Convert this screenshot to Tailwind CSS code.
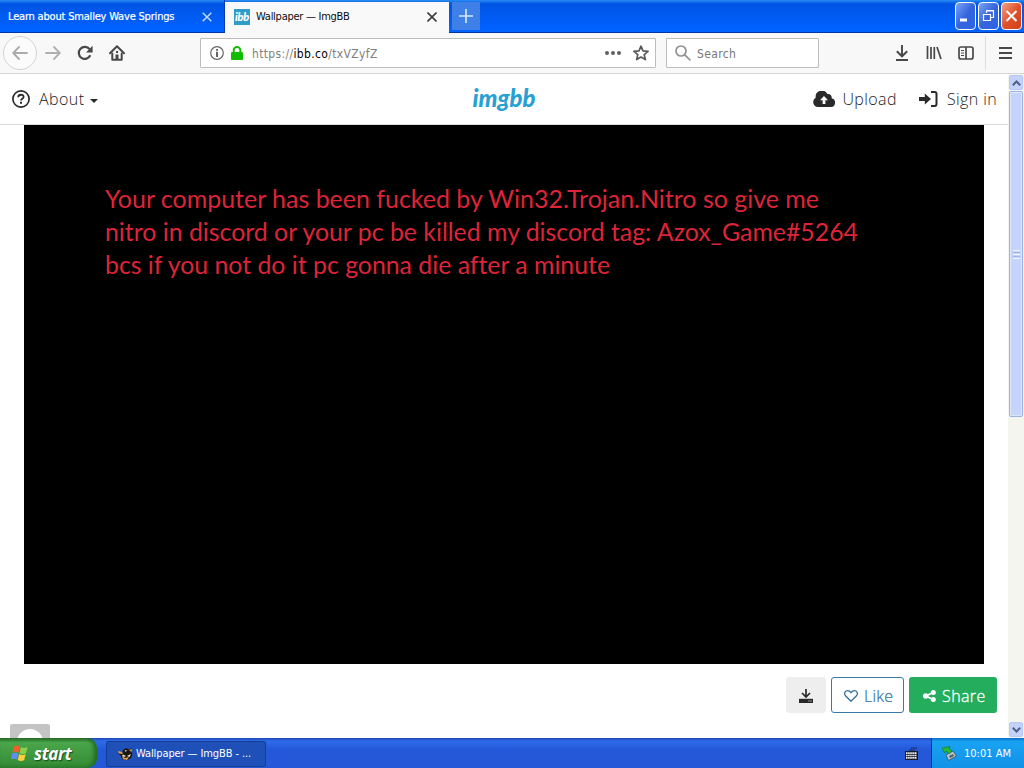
<!DOCTYPE html>
<html lang="en">
<head>
    <meta charset="UTF-8">
    <meta name="viewport" content="width=device-width, initial-scale=1.0">
    <script src="https://cdn.jsdelivr.net/npm/@tailwindcss/browser@4"></script>
    <title>Wallpaper — ImgBB</title>
</head>
<body class="w-[1024px] h-[768px] overflow-hidden bg-white flex flex-col font-['DejaVu_Sans_Condensed','DejaVu_Sans',sans-serif]">

<!-- Tab bar -->
<div class="h-[33px] shrink-0 flex items-start bg-linear-to-b from-[#2b8cf5] from-0% via-[#0054e3] via-12% to-[#0062ff] to-90% border-b border-[#0036a8] text-[11px]">
    <div class="w-[225px] h-8 flex items-center pl-2 pr-[12px] pt-[2px] text-white border-r border-[#0038b8]">
        <span class="grow pt-px whitespace-nowrap tracking-[-0.19px] [-webkit-text-stroke:0.2px_white]">Learn about Smalley Wave Springs</span>
        <svg class="w-[10px] h-[10px]" viewBox="0 0 10 10" stroke="#c4dcff" stroke-width="1.4"><path d="M0.7 0.7l8.6 8.6M9.3 0.7L0.7 9.3"/></svg>
    </div>
    <div class="w-[224px] h-[32px] mt-[2px] flex items-center pl-[9px] pr-[12px] pb-[2px] bg-[#f9f9fa] text-[#0c0c0d]">
        <span class="w-4 h-4 mr-[6px] bg-[#2f9dc8] text-white font-['Lato',sans-serif] font-black italic text-[11px] leading-[15px] text-center tracking-[-0.3px]">ibb</span>
        <span class="grow pt-px whitespace-nowrap tracking-[-0.26px]">Wallpaper — ImgBB</span>
        <svg class="w-[10px] h-[10px]" viewBox="0 0 10 10" stroke="#3c3c3e" stroke-width="1.6"><path d="M0.5 0.5l9 9M9.5 0.5l-9 9"/></svg>
    </div>
    <div class="w-[28px] h-[28px] mt-[2px] ml-[3px] bg-[#3f7fe8] flex items-center justify-center">
        <svg class="w-[14px] h-[14px]" viewBox="0 0 14 14" stroke="#d5e5ff" stroke-width="1.7"><path d="M7 0v14M0 7h14"/></svg>
    </div>
    <div class="ml-auto mr-[2px] mt-[2px] flex gap-[2px]">
        <div class="w-[21px] h-[28px] rounded-[4px] border border-white bg-linear-to-br from-[#7ba2f5] via-[#3565dc] to-[#2a62e8]">
            <svg class="w-[19px] h-[26px]" viewBox="0 0 19 26"><path fill="#fff" d="M4 15.500h7v3H4z"/></svg>
        </div>
        <div class="w-[21px] h-[28px] rounded-[4px] border border-white bg-linear-to-br from-[#7ba2f5] via-[#3565dc] to-[#2a62e8]">
            <svg class="w-[19px] h-[26px]" viewBox="0 0 19 26" fill="none" stroke="#fff" stroke-width="1.200"><path d="M7.500 10V8h7v6.500H12M7 7.500h8M4.500 11.500h7v6h-7zM4 11.500h8"/></svg>
        </div>
        <div class="w-[21px] h-[28px] rounded-[4px] border border-white bg-linear-to-br from-[#f0a184] via-[#e0512a] to-[#d0401a]">
            <svg class="w-[19px] h-[26px]" viewBox="0 0 19 26" stroke="#fff" stroke-width="2"><path d="M4.500 8l10 10M14.500 8l-10 10"/></svg>
        </div>
    </div>
</div>

<!-- Navigation toolbar -->
<div class="h-[41px] shrink-0 flex items-center bg-[#f8f8f8] border-b border-[#d6d6d6] text-[12px]">
    <div class="w-[34px] h-[34px] ml-[3px] rounded-full border border-[#d3d3d3] bg-[#fbfbfb] flex items-center justify-center">
        <svg class="w-4 h-4" viewBox="0 0 16 16" fill="none" stroke="#aaaaab" stroke-width="1.800" stroke-linecap="round" stroke-linejoin="round"><path d="M15 8H1.500M7 2L1.200 8L7 14"/></svg>
    </div>
    <svg class="w-4 h-4 ml-2" viewBox="0 0 16 16" fill="none" stroke="#b0b0b1" stroke-width="1.800" stroke-linecap="round" stroke-linejoin="round"><path d="M1 8h13.500M9 2l5.800 6L9 14"/></svg>
    <svg class="w-4 h-4 ml-4" viewBox="0 0 16 16" fill="none" stroke="#48484a" stroke-width="2.200"><path d="M13.300 10.300A6 6 0 1 1 12.600 4.200"/><path fill="#48484a" stroke="none" d="M15.600 0.800v6.700H9z"/></svg>
    <svg class="w-4 h-4 ml-4" viewBox="0 0 16 16" fill="none" stroke="#48484a" stroke-width="2" stroke-linejoin="round" stroke-linecap="round"><path d="M1 8.200L8 1.200l7 7"/><path d="M3.300 8.500v6.300h9.400V8.500"/><path fill="#48484a" stroke="none" d="M6.500 9.500h3V15h-3zM7 6h2v2H7z"/></svg>
    <div class="w-[456px] h-[30px] ml-[75px] flex items-center pl-[9px] pr-[6px] bg-white border border-[#bdbdbd] rounded-[1px]">
        <svg class="w-[14px] h-[14px]" viewBox="0 0 14 14"><circle cx="7" cy="7" r="6.300" fill="none" stroke="#666" stroke-width="1.200"/><path fill="#555" d="M6.100 3h1.800v1.700H6.100zM6.100 5.800h1.800V11H6.100z"/></svg>
        <svg class="w-3 h-[14px] ml-[7px]" viewBox="0 0 12 14"><path fill="#12bc00" d="M0 7.200Q0 6 1.200 6h9.600Q12 6 12 7.200V13q0 1-1 1H1q-1 0-1-1z"/><path fill="none" stroke="#12bc00" stroke-width="1.900" d="M2.700 7V4.300a3.300 3.300 0 0 1 6.600 0V7"/></svg>
        <span class="grow ml-[9px] pt-px whitespace-nowrap text-[#808080] tracking-[0.35px]">https://<span class="text-black">ibb.co</span>/txVZyfZ</span>
        <svg class="w-4 h-4" viewBox="0 0 16 16" fill="#606062"><circle cx="2" cy="8" r="2"/><circle cx="8" cy="8" r="2"/><circle cx="14" cy="8" r="2"/></svg>
        <svg class="w-4 h-4 ml-3" viewBox="0 0 16 16" fill="none" stroke="#58585a" stroke-width="1.700" stroke-linejoin="round"><path d="M8 1.200l2 4.700 5.100.4-3.900 3.300 1.200 5L8 12l-4.400 2.600 1.200-5L.9 6.300 6 5.900z"/></svg>
    </div>
    <div class="w-[153px] h-[30px] ml-[10px] flex items-center pl-2 bg-white border border-[#bdbdbd] rounded-[1px]">
        <svg class="w-4 h-4" viewBox="0 0 16 16" fill="none" stroke="#909091" stroke-width="1.700" stroke-linecap="round"><circle cx="6" cy="6" r="5"/><path d="M9.800 9.800l5.200 5.200"/></svg>
        <span class="ml-[6px] pt-px text-[#777] tracking-[0.35px]">Search</span>
    </div>
    <svg class="w-[14px] h-4 ml-auto" viewBox="0 0 14 16" fill="none" stroke="#48484a" stroke-width="1.900"><path d="M7 0v11M1.800 6.200L7 11.300l5.200-5.100M1 15h12"/></svg>
    <svg class="w-4 h-4 ml-[17px]" viewBox="0 0 16 16" fill="none" stroke="#48484a" stroke-width="1.700"><path d="M1.500 1v13M5 2v12M8.300 2v12M11 2l4 12"/></svg>
    <svg class="w-4 h-4 ml-4" viewBox="0 0 16 16" fill="none" stroke="#48484a" stroke-width="1.700"><rect x="1" y="2" width="14" height="12" rx="2"/><path d="M8 2v12"/><path stroke-width="1" d="M3 5.500h3M3 8h3M3 10.500h3"/></svg>
    <div class="w-px h-[34px] ml-[11px] bg-[#dedede]"></div>
    <svg class="w-[13px] h-[14px] ml-[13px] mr-[12px]" viewBox="0 0 13 14" stroke="#48484a" stroke-width="1.900"><path d="M0 2h13M0 7h13M0 12h13"/></svg>
</div>

<!-- Page -->
<div class="h-[664px] shrink-0 flex overflow-hidden">
    <div class="grow flex flex-col font-['Open_Sans',sans-serif] font-light text-[#222]">
        <div class="h-[51px] shrink-0 grid grid-cols-3 items-center border-b border-[#dcdcdc] pl-3 pr-[11px] text-[16px]">
            <div class="flex items-center">
                <svg class="w-[18px] h-[18px]" viewBox="0 0 18 18" fill="none" stroke="#2a2a2a" stroke-width="1.700"><circle cx="9" cy="9" r="8.100"/><path stroke-width="1.800" d="M6.200 7.200C6.400 3.900 11.700 4 11.600 7c0 1.700-2.600 1.900-2.600 3.600"/><path fill="#2a2a2a" stroke="none" d="M8 11.700h2v2H8z"/></svg>
                <span class="ml-[9px] tracking-[0.45px]">About</span>
                <svg class="w-2 h-1 ml-[5px] mt-[3px]" viewBox="0 0 8 4"><path fill="#2a2a2a" d="M0 0h8L4 4z"/></svg>
            </div>
            <svg class="w-[66px] h-[28px] justify-self-center overflow-visible" viewBox="0 0 66 28"><text x="1.500" y="21.500" textLength="63" lengthAdjust="spacingAndGlyphs" fill="#27a1d3" font-family="Lato, sans-serif" font-weight="900" font-style="italic" font-size="24">imgbb</text></svg>
            <div class="flex items-center justify-end whitespace-nowrap tracking-[0.4px]">
                <svg class="w-[22px] h-4 mr-[7px]" viewBox="0 0 22 16"><path fill="#2a2a2a" d="M5 16a5 5 0 0 1-2.300-9.300A6.200 6.200 0 0 1 14.400 3.100a3.500 3.500 0 0 1 4.200 4.200A4.400 4.400 0 0 1 17.600 16z"/><path fill="#fff" d="M11 5l4 4.300h-2.600V13H9.600V9.300H7z"/></svg>
                <span>Upload</span>
                <svg class="w-[19px] h-4 ml-[22px] mr-[9px]" viewBox="0 0 19 16"><path fill="#2a2a2a" d="M0 6h5.800V2.400L12 8l-6.200 5.600V10H0z"/><path fill="none" stroke="#2a2a2a" stroke-width="2" d="M12 1h3.500Q17.500 1 17.500 3v10q0 2-2 2H12"/></svg>
                <span>Sign in</span>
            </div>
        </div>
        <div class="w-[960px] h-[539px] shrink-0 ml-6 bg-black pl-[81px] pt-[57px]">
            <svg class="w-[760px] h-[100px] [font-variant-ligatures:none]" viewBox="0 0 760 100" fill="#dd2438" font-family="Lato, sans-serif" font-weight="400" font-size="25">
                <text x="0" y="25.500" textLength="714" lengthAdjust="spacingAndGlyphs">Your computer has been fucked by Win32.Trojan.Nitro so give me</text>
                <text x="0" y="58.500" textLength="753" lengthAdjust="spacingAndGlyphs">nitro in discord or your pc be killed my discord tag: Azox_Game#5264</text>
                <text x="0" y="91.500" textLength="505" lengthAdjust="spacingAndGlyphs">bcs if you not do it pc gonna die after a minute</text>
            </svg>
        </div>
        <div class="h-[60px] shrink-0 flex items-start justify-end gap-[5px] pt-[13px] pr-[11px] text-[16px]">
            <div class="w-10 h-9 bg-[#eeeeee] rounded-[3px] flex items-center justify-center">
                <svg class="w-[14px] h-[14px] mt-px" viewBox="0 0 14 14"><path fill="#2a2a2a" d="M0 9.800h14V14H0z"/><path fill="none" stroke="#2a2a2a" stroke-width="1.700" d="M7 0v7.500M3 4l4 4 4-4"/><path fill="#eee" d="M9.500 11.500h1v1h-1zM11.500 11.500h1v1h-1z"/></svg>
            </div>
            <div class="w-[73px] h-9 border border-[#3a78a5] rounded-[3px] flex items-center pl-3 text-[#2f6f9f]">
                <svg class="w-[14px] h-3 mr-[6px] mt-[2px]" viewBox="0 0 14 12" fill="none" stroke="#2f6f9f" stroke-width="1.300"><path d="M7 11.200L1.500 5.800C-.6 3 1.500.7 3.600.7 5.300.7 6.300 1.700 7 2.700 7.700 1.700 8.700.7 10.400.7c2.100 0 4.200 2.300 2.100 5.100z"/></svg>
                <span class="pt-px tracking-[0.2px] [-webkit-text-stroke:0.2px_#2f6f9f]">Like</span>
            </div>
            <div class="w-[88px] h-9 bg-[#23ad5c] rounded-[3px] flex items-center pl-[14px] text-white">
                <svg class="w-[13px] h-3 mr-[6px] mt-px" viewBox="0 0 13 12"><path fill="none" stroke="#fff" stroke-width="1.700" d="M10 2.500L3 6l7 3.500"/><circle cx="2.700" cy="6" r="2.700" fill="#fff"/><circle cx="10.300" cy="2.500" r="2.500" fill="#fff"/><circle cx="10.300" cy="9.500" r="2.500" fill="#fff"/></svg>
                <span class="pt-px tracking-[0.4px] [-webkit-text-stroke:0.3px_white]">Share</span>
            </div>
        </div>
        <div class="w-10 h-10 shrink-0 ml-[10px] rounded-[2px] bg-[#c4c4c4] overflow-hidden pt-[5px]">
            <div class="w-[26px] h-[26px] mx-auto rounded-full bg-white"></div>
        </div>
    </div>

    <!-- Scrollbar -->
    <div class="w-4 shrink-0 flex flex-col items-center bg-[#f5f5f0] py-px">
        <div class="w-[14px] h-[15px] shrink-0 rounded-[2px] bg-[#c4d2fb] border border-[#b8c9f5] flex items-center justify-center">
            <svg class="w-[9px] h-[6px]" viewBox="0 0 9 6" fill="none" stroke="#4d6185" stroke-width="2"><path d="M.8 5.200l3.700-3.700 3.700 3.700"/></svg>
        </div>
        <div class="w-[14px] h-[326px] mt-px shrink-0 rounded-[2px] bg-[#c6d3fc] border border-[#9db4dc] shadow-[inset_0_0_0_1px_#dfe7ff] flex flex-col items-center justify-center gap-px">
            <div class="w-[7px] h-px bg-[#f2f6ff]"></div>
            <div class="w-[7px] h-px bg-[#a3b6e8]"></div>
            <div class="w-[7px] h-px bg-[#f2f6ff]"></div>
            <div class="w-[7px] h-px bg-[#a3b6e8]"></div>
            <div class="w-[7px] h-px bg-[#f2f6ff]"></div>
        </div>
        <div class="w-[14px] h-[15px] mt-auto shrink-0 rounded-[2px] bg-[#c4d2fb] border border-[#b8c9f5] flex items-center justify-center">
            <svg class="w-[9px] h-[6px]" viewBox="0 0 9 6" fill="none" stroke="#4d6185" stroke-width="2"><path d="M.8.800l3.700 3.700L8.200.800"/></svg>
        </div>
    </div>
</div>

<!-- Taskbar -->
<div class="h-[30px] shrink-0 flex items-center bg-linear-to-b from-[#1f48b0] from-0% via-[#2e6bea] via-10% to-[#2458d8] to-40% text-white text-[11px]">
    <div class="w-[97px] h-[30px] flex items-center pl-[11px] rounded-r-[10px] bg-linear-to-b from-[#2c6e2c] via-[#4aa64a] via-15% to-[#338a33] shadow-[inset_-3px_0_4px_#1f6a22]">
        <svg class="w-[18px] h-[18px]" viewBox="0 0 18 18"><path fill="#f0602a" d="M3 2.500Q6 .5 9 2.500L7.500 8.500Q4.500 7 1.500 8.500z"/><path fill="#8ed04a" d="M10 3q3 2 6.500 0L15 9q-3 2-6.500 0z"/><path fill="#5f8ff5" d="M1.200 9.500q3-1.500 6 0L5.800 15.500q-3-1.500-6 0z"/><path fill="#fbd03c" d="M8.200 10q3 2 6.500 0l-1.500 6q-3 2-6.500 0z"/></svg>
        <span class="ml-[5px] pt-px font-['Open_Sans',sans-serif] font-bold italic text-[17px] leading-5 tracking-[-0.4px] [text-shadow:1px_1px_1px_#1c4a1c]">start</span>
    </div>
    <div class="w-[160px] h-[26px] ml-[9px] mt-px flex items-center pl-[11px] rounded-[2px] bg-[#1e50b8] border border-[#153e98]">
        <svg class="w-[15px] h-[14px]" viewBox="0 0 15 14"><path fill="#1c1610" d="M5 3l3-2 3 1.500L14 1l-.5 4 1 2-1.500 4-4 2-5-1L3 9 0 6l4 .5z"/><path fill="#e0a04c" d="M0 4l4 1 1 2-4-.5zM11 3l3-1-.5 3zM4 9l3 2 4-1-2 3-4-1z"/><path fill="#f5ead5" d="M5 7.500l3 1.500-2 1-2-1.500zM9 9l4-2-1.500 3zM7 3l2 .5L7.500 5z"/></svg>
        <span class="ml-[3px] pt-[2px] whitespace-nowrap tracking-[-0.1px]">Wallpaper — ImgBB - ...</span>
    </div>
    <svg class="w-[13px] h-[13px] ml-auto mr-[13px]" viewBox="0 0 13 13"><path fill="none" stroke="#14182c" stroke-dasharray="1.500 .7" d="M4 3h6M6 1h6"/><path fill="#14182c" d="M0 4h13v9H0z"/><path stroke="#f4f4e8" stroke-width="1.700" stroke-dasharray="1.600 .5" d="M1 6.200h11M1 8.500h11M1 10.900h11"/></svg>
    <div class="w-[93px] h-[30px] flex items-center pl-[10px] bg-linear-to-b from-[#0f6fc8] from-0% via-[#18a2f2] via-12% to-[#1292e8] border-l border-[#0c3d8c]">
        <svg class="w-[15px] h-[15px]" viewBox="0 0 15 15"><path fill="#b8c4c8" stroke="#34505c" stroke-width=".8" d="M4 9l7-4 3.500 5-8 4.500z"/><path fill="#4a6470" d="M7 10l4-2 1 2-4 2z"/><path fill="#27b838" stroke="#147020" stroke-width=".6" d="M0 2l8-1.500-1 2 3 2.500-3 3-3-3-1.500 2z"/></svg>
        <span class="ml-[7px] pt-[2px] whitespace-nowrap">10:01 AM</span>
    </div>
</div>
</body>
</html>
